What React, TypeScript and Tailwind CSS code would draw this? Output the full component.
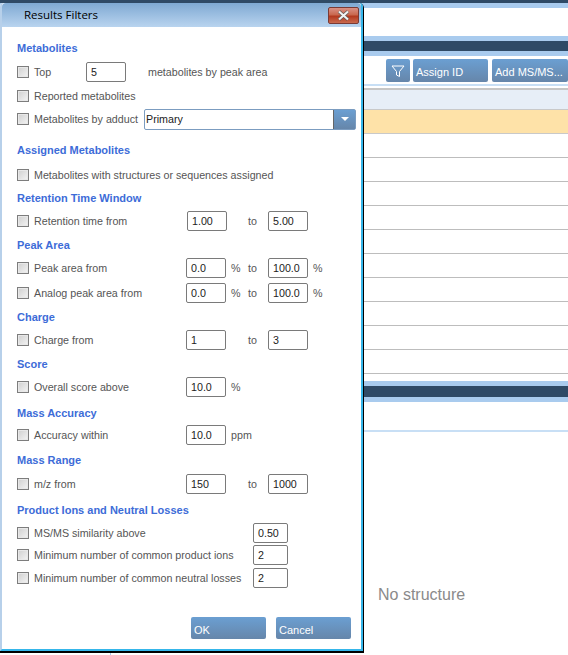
import React from "react";

const Check = () => (
  <span className="w-[12px] h-[12px] shrink-0 border border-[#7d7d7d] bg-[linear-gradient(135deg,#cfcfcf,#f4f4f4)] shadow-[inset_0_0_0_1px_#e8e8e8]" />
);

const Field = ({ v, w = "w-[40px]" }: { v: string; w?: string }) => (
  <span className={`${w} h-[20px] shrink-0 rounded-[2px] border border-[#7a7a7a] bg-white pl-[4px] text-[10.7px] leading-[18px] text-[#222]`}>{v}</span>
);

const Heading = ({ t, c }: { t: string; c: string }) => (
  <div className={`h-[20px] leading-[20px] font-bold text-[11px] text-[#3d6cd8] ${c}`}>{t}</div>
);

const Row = ({ c, label, lw, children }: { c: string; label: string; lw?: string; children?: React.ReactNode }) => (
  <div className={`h-[20px] flex items-center ${c}`}>
    <Check />
    <span className={`ml-[5px] shrink-0 whitespace-nowrap ${lw ?? ""}`}>{label}</span>
    {children}
  </div>
);

const Btn = ({ t, c }: { t: string; c: string }) => (
  <div className={`rounded-[2px] bg-[linear-gradient(#6b9fd2,#6686aa)] text-white text-[11px] leading-[26px] pl-[3px] whitespace-nowrap overflow-hidden shrink-0 ${c}`}>{t}</div>
);

const Band = ({ c }: { c: string }) => (
  <div className="shrink-0 flex flex-col">
    <div className="h-[5px] bg-[#a9cbee]" />
    <div className={`bg-[#2f4a66] ${c}`} />
    <div className="h-[5px] bg-[#a9cbee]" />
  </div>
);

const Line = () => <div className="h-[24px] shrink-0 border-b border-[#bdbdbd]" />;

export default function App() {
  return (
    <div className="relative w-[568px] h-[655px] overflow-hidden bg-white font-['Liberation_Sans',Arial,sans-serif] text-[10.7px] text-[#555]">
      {/* Application behind the dialog */}
      <div className="flex flex-col h-full">
        <div className="h-[3px] shrink-0 bg-[#2f4a66]" />
        <div className="h-[5px] shrink-0 bg-[#a9cbee]" />
        <div className="h-[28px] shrink-0 bg-white" />
        <Band c="h-[10px]" />
        <div className="h-[28px] shrink-0 flex items-start pl-[386px] gap-[3px] bg-white pt-[3px]">
          <div className="w-[24px] h-[23px] rounded-[2px] bg-[linear-gradient(#6b9fd2,#6686aa)] flex items-center justify-center">
            <svg width="14" height="14" viewBox="0 0 14 14" fill="none" stroke="#fff" strokeWidth="1">
              <path d="M1 2h12L8.5 7.5V12.5L5.5 11V7.5Z" />
            </svg>
          </div>
          <Btn t="Assign ID" c="h-[23px] w-[75px]" />
          <Btn t="Add MS/MS..." c="h-[23px] ml-[1px] w-[76px]" />
        </div>
        <div className="h-[2px] shrink-0 bg-[#c8dff5]" />
        <div className="h-[2px] shrink-0 bg-white" />
        <div className="h-[21px] shrink-0 bg-[#e7eef7] border-t-2 border-[#c6c6c6]" />
        <div className="h-[25px] shrink-0 bg-[#fee2a8] border-y border-[#c9c9c9]" />
        <Line />
        <Line />
        <Line />
        <Line />
        <Line />
        <Line />
        <Line />
        <Line />
        <Line />
        <Line />
        <div className="h-[7px] shrink-0" />
        <Band c="h-[11px]" />
        <div className="h-[30px] shrink-0 border-b-2 border-[#c8dff5]" />
        <div className="flex-1 pl-[378px] pt-[153px] text-[16px] leading-[20px] text-[#8a8a8a]">No structure</div>
      </div>

      {/* Dialog */}
      <div className="absolute left-0 top-[3px] w-[364px] h-[650px] flex flex-col rounded-tr-[5px] rounded-tl-[4px] border-r border-b-2 border-black bg-white">
        <div className="flex-1 flex flex-col min-h-0 border-l-2 border-r-2 border-b-2 border-l-[#b7d0ea] border-r-[#35b6ea] border-b-[#35b6ea] rounded-tr-[4px] rounded-tl-[4px]">
          <div className="h-[24px] shrink-0 flex items-center justify-between bg-[linear-gradient(#7fa9d3,#b9d4ef)] rounded-t-[4px] pl-[22px] pr-[2px]">
            <span className="font-['Open_Sans',sans-serif] text-[11.5px] text-black">Results Filters</span>
            <div className="mb-[-1px] w-[31px] h-[17px] rounded-[2px] border border-[#7a3a35] bg-[linear-gradient(#d99186,#c9684f_45%,#b3391f_55%,#c96a4f)] flex items-center justify-center">
              <svg width="13" height="11" viewBox="0 0 13 11">
                <path d="M2 1.5 L11 9.5 M11 1.5 L2 9.5" stroke="#555" strokeWidth="3.4" />
                <path d="M2 1.5 L11 9.5 M11 1.5 L2 9.5" stroke="#f2f2f2" strokeWidth="2.2" />
              </svg>
            </div>
          </div>

          <div className="pl-[15px] flex flex-col">
            <Heading t="Metabolites" c="mt-[11px]" />
            <Row c="mt-[4px]" label="Top" lw="w-[52px]">
              <Field v="5" />
              <span className="ml-[22px]">metabolites by peak area</span>
            </Row>
            <Row c="mt-[4px]" label="Reported metabolites" />
            <Row c="mt-[3px]" label="Metabolites by adduct" lw="w-[110px]">
              <div className="w-[212px] h-[21px] flex rounded-[2px] border border-[#7b9cc0] bg-white">
                <span className="flex-1 pl-[1px] leading-[19px] text-[#222] border-r border-[#666]">Primary</span>
                <span className="w-[21px] bg-[linear-gradient(#6b9fd2,#6686aa)] flex items-center justify-center">
                  <span className="w-0 h-0 border-x-[4px] border-x-transparent border-t-[4px] border-t-white" />
                </span>
              </div>
            </Row>

            <Heading t="Assigned Metabolites" c="mt-[11px]" />
            <Row c="mt-[5px]" label="Metabolites with structures or sequences assigned" />

            <Heading t="Retention Time Window" c="mt-[3px]" />
            <Row c="mt-[3px]" label="Retention time from" lw="w-[153px]">
              <Field v="1.00" />
              <span className="ml-[21px] w-[20px]">to</span>
              <Field v="5.00" />
            </Row>

            <Heading t="Peak Area" c="mt-[4px]" />
            <Row c="mt-[3px]" label="Peak area from" lw="w-[152px]">
              <Field v="0.0" />
              <span className="ml-[5px] w-[17px]">%</span>
              <span className="w-[20px]">to</span>
              <Field v="100.0" />
              <span className="ml-[5px]">%</span>
            </Row>
            <Row c="mt-[5px]" label="Analog peak area from" lw="w-[152px]">
              <Field v="0.0" />
              <span className="ml-[5px] w-[17px]">%</span>
              <span className="w-[20px]">to</span>
              <Field v="100.0" />
              <span className="ml-[5px]">%</span>
            </Row>

            <Heading t="Charge" c="mt-[4px]" />
            <Row c="mt-[3px]" label="Charge from" lw="w-[152px]">
              <Field v="1" />
              <span className="ml-[22px] w-[20px]">to</span>
              <Field v="3" />
            </Row>

            <Heading t="Score" c="mt-[4px]" />
            <Row c="mt-[3px]" label="Overall score above" lw="w-[152px]">
              <Field v="10.0" />
              <span className="ml-[5px]">%</span>
            </Row>

            <Heading t="Mass Accuracy" c="mt-[6px]" />
            <Row c="mt-[2px]" label="Accuracy within" lw="w-[152px]">
              <Field v="10.0" />
              <span className="ml-[5px]">ppm</span>
            </Row>

            <Heading t="Mass Range" c="mt-[5px]" />
            <Row c="mt-[4px]" label="m/z from" lw="w-[152px]">
              <Field v="150" />
              <span className="ml-[22px] w-[20px]">to</span>
              <Field v="1000" />
            </Row>

            <Heading t="Product Ions and Neutral Losses" c="mt-[6px]" />
            <Row c="mt-[3px]" label="MS/MS similarity above" lw="w-[219px]">
              <Field v="0.50" w="w-[35px]" />
            </Row>
            <Row c="mt-[2px]" label="Minimum number of common product ions" lw="w-[219px]">
              <Field v="2" w="w-[35px]" />
            </Row>
            <Row c="mt-[3px]" label="Minimum number of common neutral losses" lw="w-[219px]">
              <Field v="2" w="w-[35px]" />
            </Row>
          </div>

          <div className="mt-auto mb-[10px] flex justify-end pr-[10px] gap-[10px]">
            <Btn t="OK" c="h-[22px] w-[75px]" />
            <Btn t="Cancel" c="h-[22px] w-[75px]" />
          </div>
        </div>
      </div>
      <div className="absolute left-[110px] top-[653px] w-px h-[2px] bg-[#a9cbee]" />
    </div>
  );
}
